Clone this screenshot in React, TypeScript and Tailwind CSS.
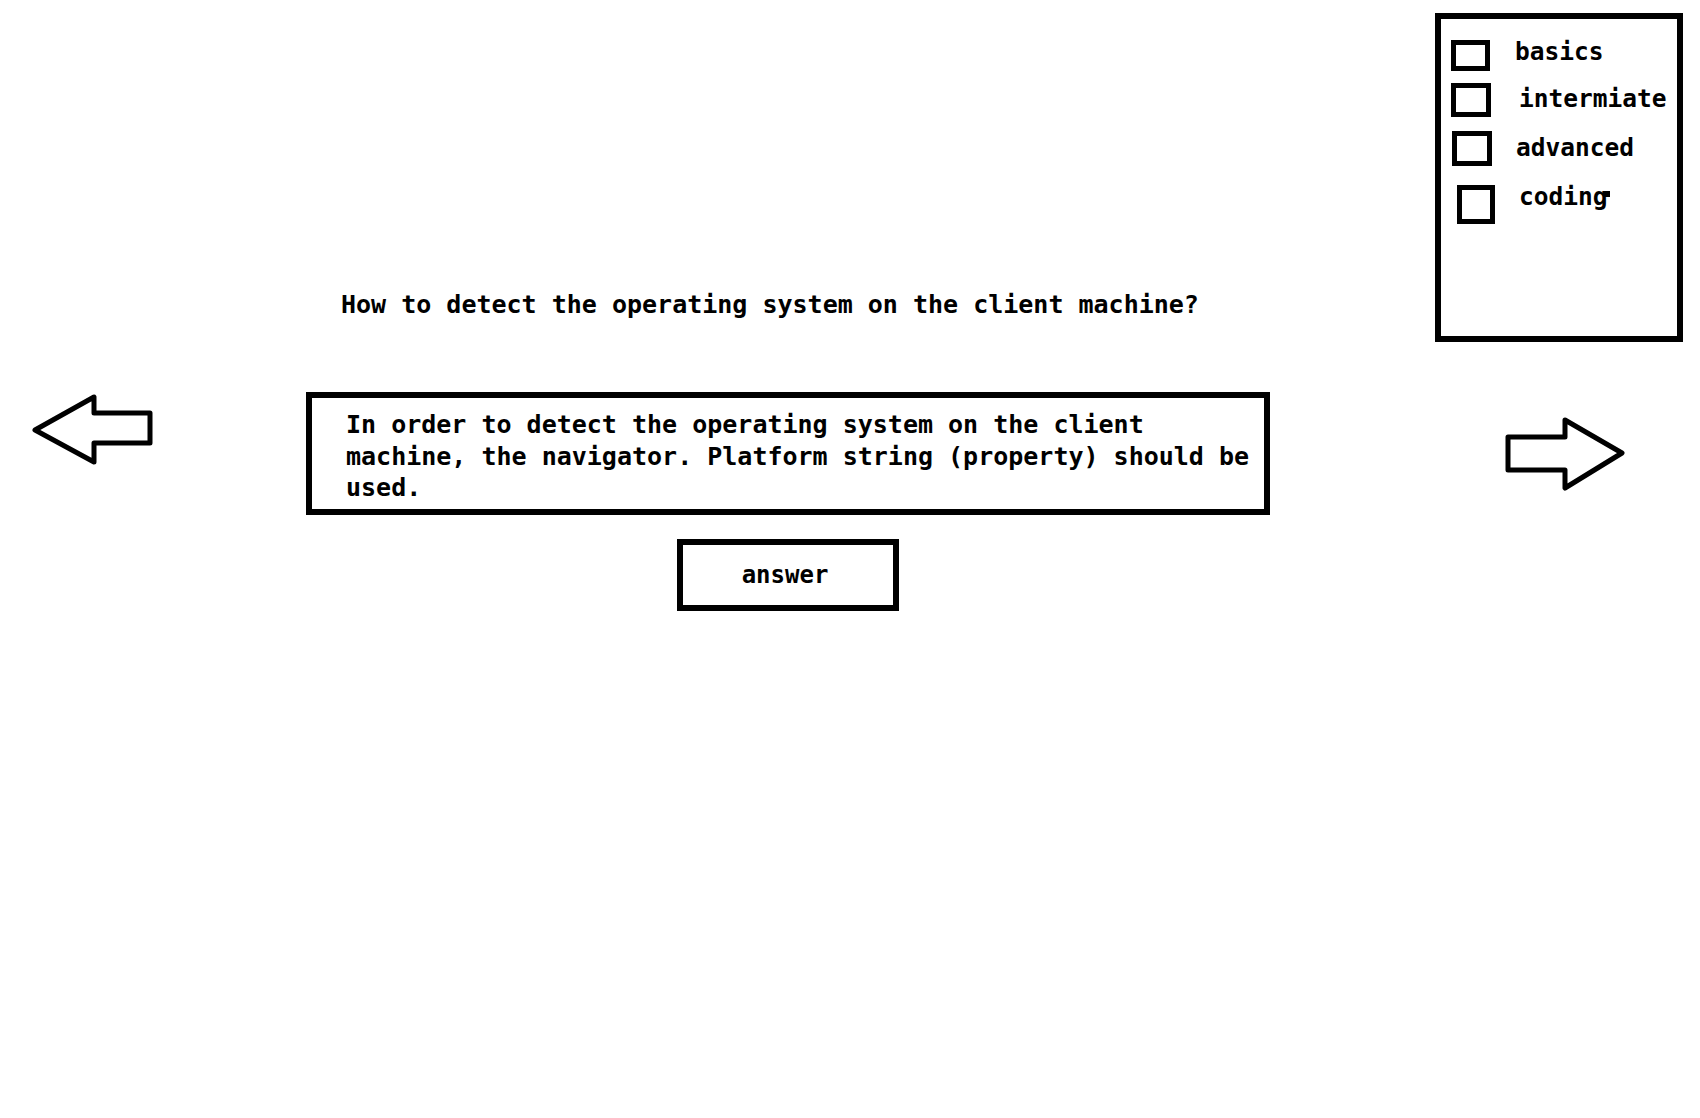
import React from "react";

const MONO = "font-['DejaVu_Sans_Mono','Liberation_Mono',monospace] font-bold text-black";

const levels = [
  { label: "basics", row: "h-[62px]", box: "mt-[21px] ml-[10px] w-[39px] h-[31px]", text: "ml-[25px] mt-[19px]" },
  { label: "intermiate", row: "h-[48px]", box: "mt-[2px] ml-[10px] w-[40px] h-[34px]", text: "ml-[28px] mt-[4px]" },
  { label: "advanced", row: "h-[52px]", box: "mt-[2px] ml-[11px] w-[40px] h-[35px]", text: "ml-[24px] mt-[4.5px]" },
  { label: "coding", row: "h-[52px]", box: "mt-[4px] ml-[16px] w-[38px] h-[39px]", text: "ml-[24px] mt-[1.5px]" },
];

function LeftArrow() {
  return (
    <svg width="130" height="80" viewBox="0 0 130 80" className="block">
      <polygon
        points="8,40 67,7 67,23 123,23 123,53 67,53 67,72"
        fill="white"
        stroke="black"
        strokeWidth="5"
        strokeLinejoin="round"
      />
    </svg>
  );
}

function RightArrow() {
  return (
    <svg width="130" height="84" viewBox="0 0 130 84" className="block">
      <polygon
        points="8,25 65,25 65,8 122,41 65,76 65,58 8,58"
        fill="white"
        stroke="black"
        strokeWidth="5"
        strokeLinejoin="round"
      />
    </svg>
  );
}

export default function App() {
  return (
    <div className={`w-[1700px] h-[1118px] bg-white flex items-start ${MONO}`}>
      {/* left nav */}
      <div className="w-[306px] shrink-0 pt-[390px] pl-[27px]">
        <LeftArrow />
      </div>

      {/* question + answer */}
      <div className="w-[964px] shrink-0 flex flex-col">
        <p className="pt-[290px] pl-[35px] text-[25px] leading-[30px] whitespace-nowrap">
          How to detect the operating system on the client machine?
        </p>
        <div className="mt-[72px] border-[6px] border-black pl-[34px] pr-[8px] pt-[11px] pb-[5px] text-[25px] leading-[31.5px]">
          In order to detect the operating system on the client machine, the navigator. Platform string (property) should be used.
        </div>
        <button className="self-center mt-[24px] w-[222px] h-[72px] border-[6px] border-black pr-[6px] text-[24px] leading-[28px] font-bold">
          answer
        </button>
      </div>

      {/* filters + right nav */}
      <div className="flex-1 flex flex-col">
        <div className="mt-[13px] ml-[165px] w-[248px] h-[329px] border-[6px] border-black flex flex-col">
          {levels.map((l) => (
            <div key={l.label} className={`flex items-start shrink-0 ${l.row}`}>
              <div className={`shrink-0 border-[5px] border-black ${l.box}`} />
              <span className={`relative text-[24.5px] leading-[28px] whitespace-nowrap ${l.text}`}>
                {l.label}
                {l.label === "coding" && (
                  <span className="absolute right-[-2px] top-[8px] w-[5px] h-[6px] bg-black" />
                )}
              </span>
            </div>
          ))}
        </div>
        <div className="mt-[70px] ml-[230px]">
          <RightArrow />
        </div>
      </div>
    </div>
  );
}
